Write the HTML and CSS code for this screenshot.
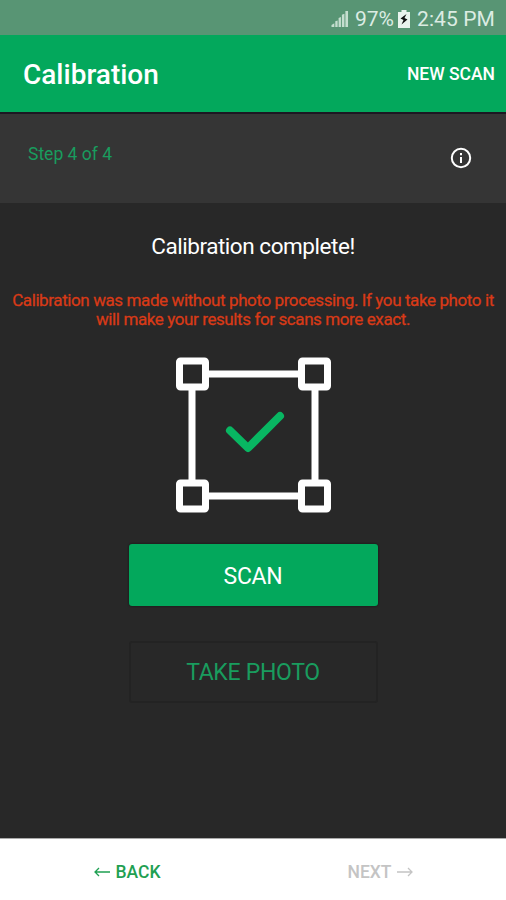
FILE: index.html
```html
<!DOCTYPE html>
<html lang="en">
<head>
  <meta charset="UTF-8">
  <meta name="viewport" content="width=device-width, initial-scale=1.0">
  <title>Calibration</title>
  <link rel="stylesheet" href="styles.css">
</head>
<body>
  <!-- Status bar -->
  <div class="status-bar">
    <svg class="signal" width="18" height="17" viewBox="0 0 18 18">
      <path d="M0 18v-2l3-2v4zM4 18v-6l2.500-1v7zM7.500 18V8.500l2.500-1V18zM11 18V5l2.700-1v14zM14.700 18V1h2.800v17z"/>
    </svg>
    <span class="percent">97%</span>
    <svg class="battery" width="12" height="18" viewBox="0 0 12 18">
      <path class="cell" d="M3.500 0h5v2H12v16H0V2h3.500z"/>
      <path class="bolt" d="M8.500 4L2.500 8.500l3 1.500-2 4.500 6-5-3-1.500z"/>
    </svg>
    <span class="clock">2:45 PM</span>
  </div>

  <!-- Toolbar -->
  <header class="toolbar">
    <h1>Calibration</h1>
    <button class="new-scan">NEW SCAN</button>
  </header>

  <div class="step-bar">
    <span class="step">Step 4 of 4</span>
    <svg class="info" width="22" height="22" viewBox="0 0 22 22">
      <circle cx="11" cy="11" r="9.200"/>
      <path d="M11 10v6M11 6v2.200"/>
    </svg>
  </div>

  <!-- Result -->
  <main class="content">
    <h2>Calibration complete!</h2>
    <p class="warning">Calibration was made without photo processing. If you take photo it<br>will make your results for scans more exact.</p>
    <svg class="frame" width="156" height="156" viewBox="0 0 156 156">
      <rect class="line" x="17" y="17" width="123" height="122"/>
      <rect class="corner" x="4.500" y="4" width="26" height="26" rx="1"/>
      <rect class="corner" x="126.500" y="4" width="26" height="26" rx="1"/>
      <rect class="corner" x="4.500" y="126" width="26" height="26" rx="1"/>
      <rect class="corner" x="126.500" y="126" width="26" height="26" rx="1"/>
      <path class="check" d="M55 73.500l18 17.500 32-32"/>
    </svg>
    <button class="btn btn-scan">SCAN</button>
    <button class="btn btn-photo">TAKE PHOTO</button>
  </main>

  <!-- Navigation -->
  <footer class="nav">
    <button class="nav-btn back">
      <svg width="16" height="10" viewBox="0 0 16 10"><path d="M16 5H1M5 1L1 5l4 4"/></svg>
      <span>BACK</span>
    </button>
    <button class="nav-btn next" disabled>
      <span>NEXT</span>
      <svg width="16" height="10" viewBox="0 0 16 10"><path d="M0 5h15M11 1l4 4-4 4"/></svg>
    </button>
  </footer>
</body>
</html>
```

FILE: styles.css
```css
/* General */
body {
  display: flex;
  flex-direction: column;
  height: 900px;
  margin: 0;
  background-color: #282828;
  color: #fff;
  font-family: Roboto, sans-serif;
}

h1,
h2,
p {
  margin: 0;
}

button {
  border: none;
  padding: 0;
  background: none;
  font-family: inherit;
  cursor: pointer;
}

/* Status bar */
.status-bar {
  display: flex;
  justify-content: flex-end;
  align-items: center;
  height: 35px;
  padding: 2px 11px 0 0;
  box-sizing: border-box;
  background-color: #589574;
  color: #dcece3;
  font-size: 21px;
}

.signal {
  margin-right: 6px;
  fill: #c5decf;
}

.percent {
  margin-right: 4px;
}

.battery {
  margin-right: 7px;
}

.clock {
  letter-spacing: 0.100px;
}

.cell {
  fill: #e9f3ed;
}

.bolt {
  fill: #111;
}

/* Toolbar */
.toolbar {
  display: flex;
  justify-content: space-between;
  align-items: center;
  height: 79px;
  padding: 0 11px 0 23px;
  box-sizing: border-box;
  border-bottom: 2px solid #1c1722;
  background-color: #03a85c;
}

.toolbar h1 {
  padding-top: 2px;
  font-size: 28px;
  font-weight: 500;
}

.new-scan {
  color: #fff;
  font-size: 17.500px;
  font-weight: 500;
}

/* Step bar */
.step-bar {
  display: flex;
  justify-content: space-between;
  align-items: center;
  height: 89px;
  padding: 0 34px 0 28px;
  box-sizing: border-box;
  background-color: #353535;
}

.step {
  margin-bottom: 9px;
  color: #199c5e;
  font-size: 17.500px;
}

.info {
  margin-bottom: 2px;
  fill: none;
  stroke: #fff;
  stroke-width: 2;
}

/* Result */
.content {
  display: flex;
  flex: 1;
  flex-direction: column;
  align-items: center;
}

.content h2 {
  margin-top: 29px;
  font-size: 22.500px;
  font-weight: 400;
  letter-spacing: -0.450px;
  line-height: 28px;
}

.warning {
  margin-top: 31px;
  color: #d83a17;
  font-size: 17px;
  letter-spacing: -0.400px;
  line-height: 19px;
  text-align: center;
  white-space: nowrap;
  -webkit-text-stroke: 0.300px #d83a17;
}

.frame {
  margin-top: 28px;
  fill: none;
  stroke: #fff;
}

.line {
  stroke-width: 7;
}

.corner {
  fill: #282828;
  stroke-width: 7;
}

.check {
  stroke: #08b662;
  stroke-width: 8;
  stroke-linecap: round;
  stroke-linejoin: round;
}

.btn {
  width: 249px;
  height: 62px;
  border-radius: 3px;
  font-size: 23px;
  letter-spacing: -0.300px;
}

.btn-scan {
  margin-top: 31px;
  padding-top: 2px;
  background-color: #03a85c;
  color: #fff;
  box-shadow: 0 0 2px #111;
}

.btn-photo {
  margin-top: 35px;
  border: 2px solid #232323;
  color: #199c5e;
}

/* Navigation */
.nav {
  display: flex;
  justify-content: space-around;
  height: 62px;
  box-sizing: border-box;
  border-top: 1px solid #aaa;
  background-color: #fff;
}

.nav-btn {
  display: flex;
  align-items: center;
  gap: 5px;
  padding-top: 5px;
  font-size: 17.500px;
  font-weight: 500;
}

.nav-btn svg {
  fill: none;
  stroke: currentColor;
  stroke-width: 1.300;
}

.back {
  padding-left: 1px;
  color: #1fa052;
}

.next {
  color: #c4c4c4;
}
```
